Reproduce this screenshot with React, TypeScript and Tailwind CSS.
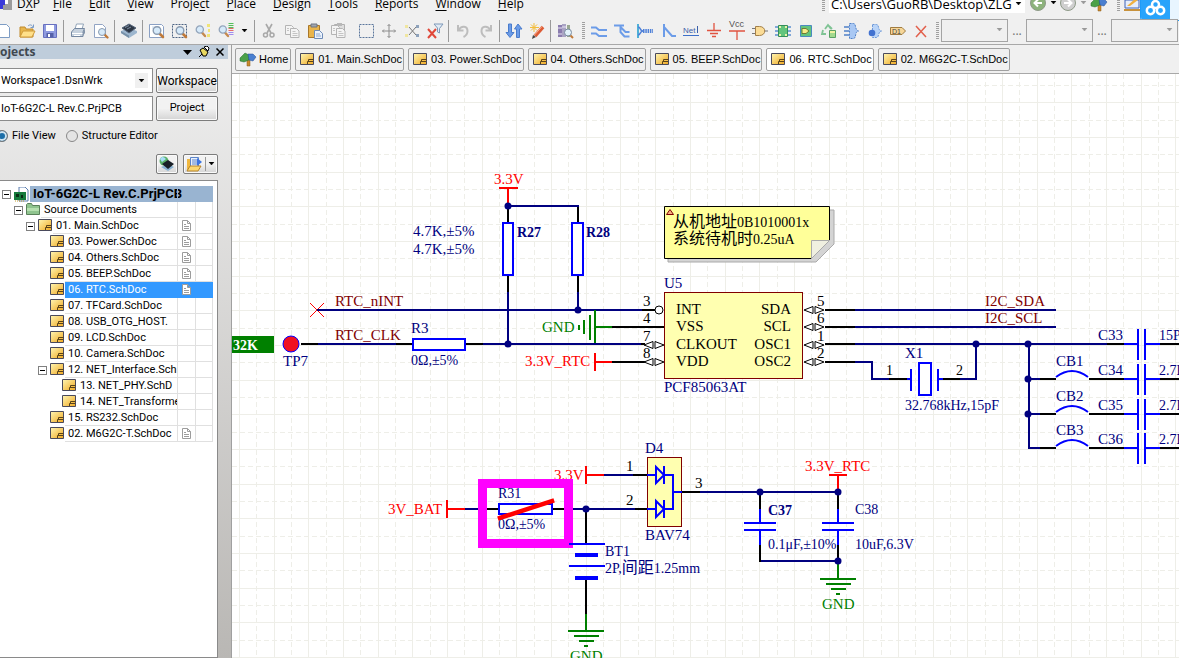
import { ReactNode } from "react";

interface IconProps {
    children: ReactNode;
    size?: number;
}

function Icon({ children, size = 16 }: IconProps) {
    return (
        <svg width={size} height={size} viewBox="0 0 16 16" fill="none" className="shrink-0 overflow-visible" aria-hidden="true">
            {children}
        </svg>
    )
}

const magnifier = (
    <>
        <path d="M10.5 10.5l3.5 3.5" stroke="#c07a3a" strokeWidth="2.6" strokeLinecap="round" />
        <circle cx="8" cy="7.5" r="3.8" fill="#d6eafa" stroke="#8a9bb0" strokeWidth="1.4" />
    </>
)

const smallMagnifier = (
    <>
        <path d="M7 9.5l3 3.5" stroke="#c58a50" strokeWidth="2.4" strokeLinecap="round" />
        <circle cx="4.8" cy="6.5" r="3.6" fill="#d6eafa" stroke="#93a5bb" strokeWidth="1.3" />
    </>
)

const grayPages = (
    <>
        <path d="M1.5 2.5h6l2 2v7h-8z" fill="#f4f4f4" stroke="#b4b4b4" />
        <path d="M6.5 5.5h6l2.500 2.500v6.500h-8.500z" fill="#f4f4f4" stroke="#b4b4b4" />
        <path d="M8.500 8.500h3M8.500 10.500h5M8.500 12.500h5M3 5.500h2M3 7.500h2" stroke="#c4c4c4" />
    </>
)

const icons: Record<string, ReactNode> = {
    New: <path d="M2.500 1.500h8l3 3v10h-11z" fill="#fff" stroke="#7d9cc4" />,
    Open: (
        <>
            <path d="M1 4h5l1 2h7v8H1z" fill="#e8b64c" stroke="#c08a2c" />
            <path d="M1 14l3-6h12l-3 6z" fill="#ffe08a" stroke="#cf9a3a" />
            <path d="M9 3c2-2 4-1 5 1M14.500 1.500v3h-3" stroke="#7a9cc8" />
        </>
    ),
    Save: (
        <>
            <path d="M1.500 1.500h13v13h-13z" fill="#8f9be0" stroke="#6870c0" />
            <path d="M4 2h8v6H4z" fill="#fff" />
            <path d="M4.500 10h7v4.500h-7z" fill="#5560a8" />
            <path d="M6 11h2v3H6z" fill="#fff" />
        </>
    ),
    Print: (
        <>
            <path d="M5 6l1.500-5h7L12 6z" fill="#fff" stroke="#92a4b8" />
            <path d="M1.500 9l3-3.500h10L13 9v4.500H1.500z" fill="#c7d2de" stroke="#7487a0" />
            <path d="M2 10.500h10.500M4 12.500h6" stroke="#fff" />
            <path d="M13 9l2-3v4l-2 3z" fill="#8495aa" />
        </>
    ),
    Preview: (
        <>
            <path d="M1.500 1.500h8l3 3v10h-11z" fill="#fff" stroke="#92a4c4" />
            <path d="M11.500 11.500l3 3" stroke="#c07a3a" strokeWidth="2.400" strokeLinecap="round" />
            <circle cx="9" cy="9" r="3.500" fill="#d6eafa" stroke="#8a9bb0" />
        </>
    ),
    Devices: (
        <>
            <path d="M0 8l8-3 8 3v2l-8 5-8-5z" fill="#9db6ce" />
            <path d="M0 8l8 4.500V15L0 10z" fill="#7690a8" />
            <path d="M1 5l7-4 7 4-7 5z" fill="#2e3846" stroke="#55657a" />
            <path d="M4 4.500l4-2M6 6l4-2" stroke="#7b8da2" />
        </>
    ),
    "Fit document": (
        <>
            <path d="M.5 1.500h12l2 2v11H.500z" fill="#fff" stroke="#8aa0c4" />
            <path d="M3 3h8v3H3z" fill="#e2ebf6" />
            {magnifier}
        </>
    ),
    "Zoom area": (
        <>
            <path d="M.5 1.500h14v13H.500z" stroke="#4e6584" strokeDasharray="2 1" />
            {magnifier}
        </>
    ),
    "Zoom selected": (
        <>
            {smallMagnifier}
            <path d="M12 1h3v3h-3zM13 6h2v3h-2zM12 11h3v3h-3z" fill="#f0e478" />
        </>
    ),
    "Zoom filtered": (
        <>
            {smallMagnifier}
            <path d="M13 0v5" stroke="#52bf59" strokeWidth="5" strokeDasharray="1 1" />
            <path d="M13 5v4" stroke="#e66a6a" strokeWidth="5" strokeDasharray="1 1" />
            <path d="M13 9v4" stroke="#a08cf0" strokeWidth="5" strokeDasharray="1 1" />
        </>
    ),
    Cut: (
        <>
            <path d="M5 1l5 9M11 1L6 10" stroke="#a8a8a8" strokeWidth="1.600" />
            <circle cx="4.500" cy="12" r="2" stroke="#a8a8a8" strokeWidth="1.500" />
            <circle cx="11" cy="12" r="2" stroke="#a8a8a8" strokeWidth="1.500" />
        </>
    ),
    Copy: grayPages,
    Paste: (
        <>
            <path d="M1.500 2.500h11v12h-11z" fill="#e8b44c" stroke="#a8772a" />
            <path d="M4 1h6v3H4z" fill="#a0a6b0" stroke="#6e7480" />
            <path d="M7.500 7.500h5l3 3v5h-8z" fill="#eaf2fc" stroke="#6f8cb8" />
            <path d="M9 11h4M9 13h5" stroke="#8fa8ce" />
        </>
    ),
    "Paste special": (
        <>
            <path d="M4.500 1.500h10v10h-10z" fill="#dedede" stroke="#b0b0b0" />
            <path d="M7 0h5v3H7z" fill="#b8b8b8" />
            {grayPages}
        </>
    ),
    "Select inside area": <path d="M1.500 1.500h14v13h-14z" stroke="#5b769c" strokeDasharray="2 1" />,
    Move: <path d="M8 1.500v13M1.500 8h13M6.500 3L8 1.500 9.500 3M6.500 13L8 14.500 9.500 13M3 6.500L1.500 8 3 9.500M13 6.500L14.500 8 13 9.500" stroke="#8c8c8c" />,
    Deselect: (
        <>
            <path d="M5 4l7 8M5 12l7-8" stroke="#777" />
            <path d="M1 2h3v3H1zM1 11h3v3H1z" fill="#f0e6a0" />
            <path d="M12 2h3v3h-3zM12 11h3v3h-3z" fill="#8ea2bb" />
        </>
    ),
    "Clear filter": (
        <>
            <path d="M7 1h9l-3.500 4.500V10l-2-1V5z" fill="#e0ebf6" stroke="#7f99b8" />
            <path d="M1 6l8 9M9 6l-8 9" stroke="#e0483a" strokeWidth="2" />
        </>
    ),
    Undo: <path d="M3 2v5.500h5.500M3.500 7c3-5 9-4 9 1 0 3-2 5-4 6" stroke="#bdbdbd" strokeWidth="2" />,
    Redo: <path d="M13 2v5.500H7.500M12.500 7c-3-5-9-4-9 1 0 3 2 5 4 6" stroke="#bdbdbd" strokeWidth="2" />,
    "Up down hierarchy": (
        <>
            <path d="M2.500 1h3v8.500H8L4 14.500 0 9.500h2.500z" fill="#6c9ce8" stroke="#4a7ccc" />
            <path d="M10.500 14.500h3V6H16L12 1 8.500 6h2z" fill="#6c9ce8" stroke="#4a7ccc" />
        </>
    ),
    "Cross probe": (
        <>
            <path d="M5 0v9M1 4.500h9M2 1.500l6 6M8 1.500l-6 6" stroke="#f3bd3c" />
            <path d="M14 4L6 13" stroke="#dd5b35" strokeWidth="3.500" />
            <path d="M13 3.500L5.500 12" stroke="#f7b08c" />
            <path d="M4 12l3 2-4 2z" fill="#444" />
        </>
    ),
    "Browse library": (
        <>
            <path d="M1 2h4v12H1z" fill="#8a7cae" />
            <path d="M5 1h4v13H5z" fill="#aaa4c4" />
            <path d="M10 2h3v12h-3z" fill="#9aa892" />
            <path d="M1 5h4M1 11h4M5 4h4" stroke="#e8e4f4" />
            <path d="M13 12l3 3" stroke="#c07a3a" strokeWidth="2" />
            <circle cx="11" cy="9.500" r="3.500" fill="#e3f3fb" stroke="#7a8ca0" />
        </>
    ),
    "Place wire": <path d="M0 4.500h5l3 2.500h8M0 10.500h5l3 2.500h8" stroke="#6c9ce8" strokeWidth="2" />,
    "Place bus": <path d="M0 2.500h10M6.500 2v7l4 4.500h5M6.500 4l5 5h4" stroke="#6c9ce8" strokeWidth="2" />,
    "Place signal harness": (
        <>
            <path d="M1 1v14" stroke="#4fb0d8" strokeWidth="2" />
            <path d="M1 4c3 0 1.500 4 5 4-3.500 0-2 4-5 4" stroke="#4f80d8" strokeWidth="1.500" />
            <path d="M6 8h10" stroke="#4f80d8" strokeWidth="4" strokeDasharray="1.500 .8" />
        </>
    ),
    "Place bus entry": <path d="M4 1v13M4 4l8 9h4" stroke="#6c9ce8" strokeWidth="2" />,
    "Place net label": (
        <>
            <path d="M0 12.500h16" stroke="#3d6fc8" />
            <text x="0" y="10" fontSize="8" fontFamily="Liberation Sans, sans-serif" fill="#3d5fa8">Net</text>
            <path d="M14.500 3v7" stroke="#3d5fa8" />
        </>
    ),
    "GND power port": <path d="M8 0v7.500M1 7.500h14M4 10.500h8M6 13.500h4" stroke="#e05340" strokeWidth="1.300" />,
    "VCC power port": (
        <>
            <text x="0" y="4" fontSize="9" fontFamily="Liberation Sans, sans-serif" fill="#555">Vcc</text>
            <path d="M0 8h16M8 8v9" stroke="#e05340" strokeWidth="1.300" />
        </>
    ),
    "Place part": (
        <>
            <path d="M0 5.500h4M0 10.500h4M12 8h4" stroke="#777" />
            <path d="M3.500 3.500h4c7 0 7 9 0 9h-4z" fill="#fbdc96" stroke="#a3804a" />
        </>
    ),
    "Place sheet symbol": (
        <>
            <path d="M3.500 2.500h9v11h-9z" fill="#62c47c" stroke="#358f58" />
            <path d="M0 4h3M0 8h3M0 12h3M13 4h3M13 8h3M13 12h3" stroke="#5b8fd0" strokeWidth="1.500" />
            <path d="M4 3h2v2H4zM4 11h2v2H4zM10 3h2v2h-2zM10 11h2v2h-2z" fill="#e9f2a8" />
        </>
    ),
    "Place sheet entry": (
        <>
            <path d="M2.500 2.500h11v11h-11z" fill="#62c47c" stroke="#4a8ac0" />
            <path d="M4 5.500h4l3 2.500-3 2.500H4z" fill="#f6ee8a" stroke="#6f7a35" />
        </>
    ),
    "Place device sheet": (
        <>
            <path d="M4 6l3-4 3 4M2 7l-1 4h4M8 3l3 3" stroke="#7fc394" strokeWidth="1.800" />
            <path d="M8.500 7.500h6v7h-6z" fill="#a2d98e" stroke="#58a064" />
            <path d="M9 8h5v2H9z" fill="#f1f2a2" />
        </>
    ),
    "Place harness connector": (
        <>
            <path d="M5.500 .5h4c3 0 1 7 5 7.500-4 .5-2 7.500-5 7.500h-4z" fill="#a9c8f4" stroke="#4f80c8" strokeDasharray="2 1" />
            <path d="M0 4h5M0 8h5M0 12h5" stroke="#4f80c8" strokeWidth="1.500" />
        </>
    ),
    "Place harness entry": (
        <>
            <path d="M5.500 1.500h4c3 0 1 6 5 6.500-4 .5-2 6.500-5 6.500h-4z" fill="#b9d4f8" stroke="#6c98d8" strokeDasharray="2 1" />
            <circle cx="5" cy="10" r="3.300" fill="#4272d0" />
        </>
    ),
    "Place port": (
        <>
            <path d="M.5 4.500H12l3.500 3.500-3.500 3.500H.500z" fill="#f7d698" stroke="#a07c40" />
            <text x="2" y="10.500" fontSize="7" fontFamily="Liberation Sans, sans-serif" fill="#444">D1</text>
        </>
    ),
    "Place no ERC": <path d="M3 3l10 11M13 3L3 14" stroke="#e2604c" strokeWidth="1.500" />,
}

const mainTools = [
    "New", "Open", "Save", "|", "Print", "Preview", "|", "Devices", "|",
    "Fit document", "Zoom area", "Zoom selected", "Zoom filtered", "v", "|",
    "Cut", "Copy", "Paste", "Paste special", " ",
    "Select inside area", "Move", "Deselect", "Clear filter", "|",
    "Undo", "Redo", "|", "Up down hierarchy", "Cross probe", "|", "Browse library",
]

const wiringTools = [
    "Place wire", "Place bus", "Place signal harness", "Place bus entry", "Place net label",
    "GND power port", "VCC power port", "Place part", "Place sheet symbol", "Place sheet entry",
    "Place device sheet", "Place harness connector", "Place harness entry", "Place port", "Place no ERC",
]

function Caret({ className = "text-black" }: { className?: string }) {
    return (
        <svg width="7" height="4" viewBox="0 0 7 4" className={`shrink-0 ${className}`} aria-hidden="true">
            <path d="M1 0h5L3.500 3z" fill="currentColor" stroke="currentColor" strokeWidth=".5" />
        </svg>
    )
}

function Grip({ className }: { className: string }) {
    return <div className={`w-[3px] shrink-0 bg-[repeating-linear-gradient(#a0a0a0_0_1px,transparent_1px_2px)] ${className}`} />
}

function Tool({ name }: { name: string }) {
    if (name === "|") {
        return <div className="flex w-[5px] shrink-0 justify-center"><div className="h-[22px] w-px bg-[#9a9a9a]" /></div>
    }
    if (name === " ") return <div className="w-[5px] shrink-0" />
    if (name === "v") {
        return <button aria-label="More" className="flex w-[15px] shrink-0 items-center justify-center"><Caret /></button>
    }
    return (
        <button aria-label={name} className="flex h-6 w-[23px] shrink-0 items-center justify-center">
            <Icon>{icons[name]}</Icon>
        </button>
    )
}

// [text before the shortcut letter, shortcut letter, text after]
const menus = [
    ["D", "X", "P"], ["", "F", "ile"], ["", "E", "dit"], ["", "V", "iew"], ["Proje", "c", "t"], ["", "P", "lace"],
    ["", "D", "esign"], ["", "T", "ools"], ["", "R", "eports"], ["", "W", "indow"], ["", "H", "elp"],
]

function Tree({ size = 16 }: { size?: number }) {
    return (
        <Icon size={size}>
            <path d="M7 5h3v10H7z" fill="#c98a2e" stroke="#8a5a18" strokeWidth=".5" />
            <path d="M0 7l5-5 4 2v5l-5 2-4-1z" fill="#4aa048" stroke="#246a2c" strokeWidth=".5" />
            <path d="M8 3h5l3 3-3 4-4-1z" fill="#4a7fd0" stroke="#234f94" strokeWidth=".5" />
        </Icon>
    )
}

function RoundArrow({ color, flip }: { color: string; flip?: boolean }) {
    return (
        <svg width="18" height="18" viewBox="0 0 18 18" fill="none" aria-hidden="true" className={flip ? "-scale-x-100" : ""}>
            <circle cx="9" cy="9" r="7.500" fill={color} stroke="#8e9a88" />
            <path d="M13 9H6M9 5.500L5.500 9 9 12.500" stroke="#fff" strokeWidth="2" />
        </svg>
    )
}

function MenuBar() {
    return (
        <header className="relative flex h-[17px] shrink-0 items-start font-['Open_Sans',sans-serif] text-[12px] leading-2 text-black">
            <svg width="13" height="11" viewBox="0 0 13 11" className="mr-1 shrink-0" aria-hidden="true">
                <path d="M3 0h9v10H3z" fill="#9c9c9c" />
                <path d="M0 0h5v5H3v4H0z" fill="#3b3bd8" />
                <path d="M5 0h3v4H5z" fill="#fff" />
            </svg>
            <nav className="flex flex-1 gap-[17px]">
                {menus.map(([before, key, after]) => (
                    <button key={before + key + after} className="h-2 shrink-0 text-left leading-2 first:-mr-1">
                        {before}<span className="underline underline-offset-2">{key}</span>{after}
                    </button>
                ))}
            </nav>
            <Grip className="mr-1 h-3" />
            <div className="flex h-[13px] w-[196px] shrink-0 items-start bg-white">
                <input
                    aria-label="Document path"
                    defaultValue="C:\Users\GuoRB\Desktop\ZLG-"
                    className="-mt-1.5 h-5 w-[183px] bg-transparent pl-0.5 text-[13px] leading-5 outline-none"
                />
                <button aria-label="Path history" className="flex h-2 w-[13px] items-center justify-center"><Caret /></button>
            </div>
            <div className="-mt-2 flex h-[21px] w-[66px] shrink-0 items-center justify-between px-1 text-black">
                <button aria-label="Back"><RoundArrow color="#8db37c" /></button>
                <button aria-label="Back history"><Caret /></button>
                <button aria-label="Forward"><RoundArrow color="#cfcfcf" flip /></button>
                <button aria-label="Forward history"><Caret className="text-[#999]" /></button>
            </div>
            <button aria-label="Home page" className="-mt-1 w-5 shrink-0"><Tree /></button>
            <Grip className="ml-1.5 h-3" />
            <svg width="18" height="12" viewBox="0 0 18 12" className="mr-[37px] ml-1 shrink-0" aria-hidden="true">
                <path d="M1 0h14v8H1z" fill="#e7eefb" stroke="#3f62b8" />
                <path d="M3 6l9-8 2 2-8 6z" fill="#f0b040" />
                <path d="M0 9h17v2H0z" fill="#c8923c" />
            </svg>
            <div className="absolute top-0 right-0 flex h-[21px] w-[39px] overflow-hidden rounded-bl-sm border-b border-l border-[#1e9bf8] bg-[#e8f5ff]">
                <button aria-label="Cloud upload" className="flex w-[29px] items-start justify-center bg-[#29a3fb]">
                    <svg width="21" height="17" viewBox="0 0 21 17" fill="none" stroke="#fff" strokeWidth="2.500">
                        <circle cx="10.500" cy="4.500" r="3.500" />
                        <circle cx="5.500" cy="10.500" r="3.700" />
                        <circle cx="15.500" cy="10.500" r="3.700" />
                    </svg>
                </button>
            </div>
        </header>
    )
}

function ToolbarSelect({ label }: { label: string }) {
    return (
        <div className="relative h-[23px] w-[67px] shrink-0 border border-[#a4a4a4] bg-[#f0f0f0]">
            <select aria-label={label} className="h-full w-full appearance-none" />
            <div className="pointer-events-none absolute top-2 right-1"><Caret className="text-[#999]" /></div>
        </div>
    )
}

function Toolbar() {
    return (
        <div className="flex h-7 shrink-0 items-center border-b border-[#a8a8a8]">
            <div className="-ml-2 flex items-center">
                {mainTools.map((name, i) => <Tool key={i} name={name} />)}
            </div>
            <Grip className="mr-0.5 ml-1.5 h-[18px]" />
            <div className="flex items-center">
                {wiringTools.map((name) => <Tool key={name} name={name} />)}
            </div>
            <Grip className="mr-0.5 ml-1 h-[18px]" />
            <ToolbarSelect label="Mask level" />
            <button aria-label="Mask options" className="mx-1 w-2.5 shrink-0 text-xs text-[#777]">...</button>
            <ToolbarSelect label="Variant" />
            <button aria-label="Variant options" className="mx-1 w-2.5 shrink-0 text-xs text-[#777]">...</button>
            <ToolbarSelect label="Revision" />
        </div>
    )
}

function SheetIcon() {
    return (
        <svg width="14" height="12" viewBox="0 0 14 12" className="shrink-0" aria-hidden="true">
            <defs>
                <linearGradient id="sheet" x1="0" y1="0" x2="1" y2="1">
                    <stop offset="0" stopColor="#fff6b4" />
                    <stop offset="1" stopColor="#f0a820" />
                </linearGradient>
            </defs>
            <path d="M.5 .5h13v11H.500z" fill="url(#sheet)" stroke="#4a4a5c" />
            <path d="M7.500 11v-2.500h1v-2h5M8 8.500h5" fill="none" stroke="#5a4318" />
        </svg>
    )
}

function DocIcon() {
    return (
        <svg width="9" height="11" viewBox="0 0 9 11" fill="#fff" stroke="#9c9c9c" aria-label="Open document">
            <path d="M.5 .5h5l3 3v7h-8zM5.500 .5v3h3M2 4.500h2M2 6.500h5M2 8.500h5" />
        </svg>
    )
}

interface TreeItem {
    label: string;
    level: number;
    kind?: "project" | "folder";
    expanded?: boolean;
    open?: boolean;
    selected?: boolean;
}

const treeItems: TreeItem[] = [
    { label: "IoT-6G2C-L Rev.C.PrjPCB", level: 0, kind: "project", expanded: true },
    { label: "Source Documents", level: 1, kind: "folder", expanded: true },
    { label: "01. Main.SchDoc", level: 2, expanded: true, open: true },
    { label: "03. Power.SchDoc", level: 3, open: true },
    { label: "04. Others.SchDoc", level: 3, open: true },
    { label: "05. BEEP.SchDoc", level: 3, open: true },
    { label: "06. RTC.SchDoc", level: 3, open: true, selected: true },
    { label: "07. TFCard.SchDoc", level: 3 },
    { label: "08. USB_OTG_HOST.", level: 3 },
    { label: "09. LCD.SchDoc", level: 3 },
    { label: "10. Camera.SchDoc", level: 3 },
    { label: "12. NET_Interface.Sch", level: 3, expanded: true },
    { label: "13. NET_PHY.SchD", level: 4 },
    { label: "14. NET_Transforme", level: 4 },
    { label: "15. RS232.SchDoc", level: 3 },
    { label: "02. M6G2C-T.SchDoc", level: 3, open: true },
]

const indents = ["pl-0.5", "pl-3.5", "pl-[26px]", "pl-[38px]", "pl-[50px]"]

function TreeRow({ item }: { item: TreeItem }) {
    const root = item.kind === "project"
    const line = item.selected ? "border-[#3399ff]" : root ? "border-[#99b4d1]" : "border-[#e0e0e0]"
    const fill = item.selected ? "bg-[#3399ff] text-white" : root ? "bg-[#99b4d1] text-[13px] font-bold" : ""
    return (
        <li className={`flex h-4 ${indents[item.level]}`}>
            <div className="flex w-3 shrink-0 items-center">
                {item.expanded && (
                    <button aria-label={`Collapse ${item.label}`} className="flex size-[9px] items-center justify-center border border-[#808080] bg-white">
                        <span className="h-px w-[5px] bg-black" />
                    </button>
                )}
            </div>
            <div className={`flex shrink-0 items-start pt-px ${root ? "w-4" : "w-[15px]"}`}>
                {root && (
                    <svg width="15" height="15" viewBox="0 0 15 15" aria-hidden="true">
                        <path d="M5 0h6l3 3v11H5z" fill="#fff" stroke="#5c7fb0" />
                        <path d="M0 5h12v8H0z" fill="#157a3c" />
                        <path d="M2 7h3v3H2zM7 8h2v3H7z" fill="#072c14" />
                        <path d="M1 14h10" stroke="#c8a030" strokeDasharray="1 1" />
                    </svg>
                )}
                {item.kind === "folder" && (
                    <svg width="14" height="12" viewBox="0 0 14 12" aria-hidden="true">
                        <path d="M.5 1.500L1.500 .5h4l1 2h7v9H.500z" fill="#8fc48f" stroke="#5a805a" />
                        <path d="M1 5h12v3H1z" fill="#b6e0b0" />
                    </svg>
                )}
                {!item.kind && <SheetIcon />}
            </div>
            <div className={`flex min-w-0 flex-1 border-b ${line} ${fill}`}>
                <span className={`min-w-0 flex-1 pl-[3px] leading-4 whitespace-nowrap ${root ? "" : "overflow-hidden"}`}>{item.label}</span>
                <span className={`flex w-[18px] shrink-0 items-center justify-center border-l ${line}`}>{item.open && <DocIcon />}</span>
                <span className={`w-[18px] shrink-0 border-x ${line}`} />
            </div>
        </li>
    )
}

const buttonStyle = "rounded-xs border border-[#7c7c7c] bg-linear-to-b from-[#f2f2f2] from-50% to-[#d4d4d4] inset-ring inset-ring-[#fafafa]"

function ProjectsPanel() {
    return (
        <aside className="flex w-[231px] shrink-0 flex-col overflow-hidden bg-linear-to-b from-[#f0f0f0] to-[#b9b7b4] font-[Roboto,sans-serif] text-[11px] text-black">
            <div className="mr-[3px] flex h-[14px] shrink-0 items-center overflow-hidden bg-[#bfcddb] pr-1">
                <h2 className="-ml-[13px] flex-1 font-['Open_Sans',sans-serif] text-[12px] leading-3 font-bold text-[#404850]">Projects</h2>
                <div className="flex items-center gap-1.5">
                    <button aria-label="Panel menu">
                        <svg width="9" height="5" viewBox="0 0 9 5"><path d="M0 0h9L4.500 5z" /></svg>
                    </button>
                    <button aria-label="Pin panel">
                        <svg width="12" height="12" viewBox="0 0 12 12">
                            <path d="M1 11l3-3" stroke="#000" />
                            <path d="M2 4l3-2 5 4-2 4H5z" fill="#e8d860" stroke="#000" />
                            <path d="M6 1l3-1 2 2-1 3z" fill="#fff" stroke="#000" />
                        </svg>
                    </button>
                    <button aria-label="Close panel">
                        <svg width="8" height="8" viewBox="0 0 8 8"><path d="M.5 .5l7 7M7.500 .5l-7 7" stroke="#000" strokeWidth="1.500" /></svg>
                    </button>
                </div>
            </div>
            <div className="mt-[9px] mr-[13px] grid shrink-0 grid-cols-[minmax(0,1fr)_62px] gap-[3px]">
                <div className="relative -ml-1 h-[25px] border border-[#8c8c8c] bg-white">
                    <select aria-label="Workspace file" className="h-full w-full appearance-none pt-0.5 pl-1">
                        <option>Workspace1.DsnWrk</option>
                    </select>
                    <div className="pointer-events-none absolute top-1 right-1 flex h-[15px] w-[13px] items-center justify-center bg-[#f0f0f0]"><Caret /></div>
                </div>
                <button className={`h-[25px] text-[12px] ${buttonStyle}`}>Workspace</button>
                <input aria-label="Project file" defaultValue="IoT-6G2C-L Rev.C.PrjPCB" className="-ml-1 h-[25px] min-w-0 border border-[#8c8c8c] bg-white pl-1" />
                <button className={`h-[25px] ${buttonStyle}`}>Project</button>
            </div>
            <div className="-ml-1 mt-2 flex h-[14px] shrink-0 items-center gap-2.5">
                <label className="flex items-center gap-1">
                    <input type="radio" name="view" defaultChecked className="size-3 appearance-none rounded-full border border-[#777] bg-white checked:bg-[#1b6ea8] checked:inset-ring-2 checked:inset-ring-[#cfe4f0]" />
                    File View
                </label>
                <label className="flex items-center gap-1">
                    <input type="radio" name="view" className="size-3 appearance-none rounded-full border border-[#888] bg-[#e4e4e4]" />
                    Structure Editor
                </label>
            </div>
            <div className="mt-[11px] mr-[13px] flex h-5 shrink-0 justify-end gap-[5px]">
                <button aria-label="Compile project" className={`flex w-[22px] items-center justify-center ${buttonStyle}`}>
                    <Icon>
                        <circle cx="5" cy="5" r="4.500" fill="#58b068" />
                        <path d="M1 3c2-3 4-2 6 0L3 6z" fill="#a8dcf8" />
                        <path d="M2 11l7-3 6 3-6 4z" fill="#8ab4d4" />
                        <path d="M3 8l6-4 6 4-6 5z" fill="#182028" />
                    </Icon>
                </button>
                <button aria-label="Project options" className={`flex w-[35px] items-center justify-center gap-0.5 ${buttonStyle}`}>
                    <Icon>
                        <path d="M0 3h6v11H0z" fill="#f0b840" />
                        <path d="M3.500 1.500h8v10h-8z" fill="#e8f0fc" stroke="#5c84c8" />
                        <path d="M5 4h5M5 6h5M5 8h5" stroke="#5c84c8" />
                        <path d="M10 2l5 4-5 4z" fill="#3c74e0" />
                        <path d="M0 15l3-5h11l-3 5z" fill="#fcd870" stroke="#b88428" />
                    </Icon>
                    <span className="h-3.5 w-px bg-[#999]" />
                    <Caret />
                </button>
            </div>
            <ul className="-ml-px mt-1.5 mr-[13px] flex-1 overflow-hidden border border-[#8a8a8a] bg-white pt-[5px] pr-1">
                {treeItems.map((item) => <TreeRow key={item.label} item={item} />)}
            </ul>
        </aside>
    )
}

const tabs = ["01. Main.SchDoc", "03. Power.SchDoc", "04. Others.SchDoc", "05. BEEP.SchDoc", "06. RTC.SchDoc", "02. M6G2C-T.SchDoc"]

function DocumentTabs() {
    return (
        <div className="flex h-7 shrink-0 items-center gap-1 pl-[3px] font-['Liberation_Sans',sans-serif] text-[11px] text-black">
            <button className="flex h-[23px] shrink-0 items-center gap-[3px] rounded-xs border border-[#a0a0a0] pr-0.5 pl-1">
                <Tree />Home
            </button>
            {tabs.map((tab) => (
                <button
                    key={tab}
                    className={`flex h-[23px] shrink-0 items-center gap-1 rounded-xs border border-[#a0a0a0] pr-px pl-1 ${tab.startsWith("06") ? "bg-white" : ""}`}
                >
                    <SheetIcon />{tab}
                </button>
            ))}
        </div>
    )
}

const NAVY = "#000080"
const BLUE = "#0000ff"
const GREEN = "#008000"
const RED = "#ff0000"
const MAROON = "#800000"

function Wire({ d, color = NAVY, width = 2 }: { d: string; color?: string; width?: number }) {
    return <path d={d} stroke={color} strokeWidth={width} fill="none" shapeRendering="crispEdges" />
}

interface LabelProps {
    x: number;
    y: number;
    children: ReactNode;
    color?: string;
    size?: number;
    bold?: boolean;
    end?: boolean;
}

function Label({ x, y, children, color = NAVY, size = 15, bold, end }: LabelProps) {
    return (
        <text x={x} y={y} fill={color} fontSize={size} fontWeight={bold ? 700 : 400} textAnchor={end ? "end" : "start"}>
            {children}
        </text>
    )
}

function Junction({ x, y }: { x: number; y: number }) {
    return <circle cx={x} cy={y} r="3.500" fill={NAVY} />
}

// bidirectional pin marker, 20px wide
function PinArrows({ x, y }: { x: number; y: number }) {
    return (
        <g transform={`translate(${x} ${y})`} fill="#fff" stroke="#000">
            <path d="M0 0l9-3.500v7zM20 0l-9-3.500v7z" />
        </g>
    )
}

function Ground({ x, y }: { x: number; y: number }) {
    return <Wire color={GREEN} d={`M${x} ${y - 17}v17M${x - 18} ${y}h36M${x - 12} ${y + 5}h25M${x - 7} ${y + 10}h15M${x - 2} ${y + 15}h4`} />
}

function Grid() {
    const columns = Array.from({ length: 56 }, (_, i) => Math.round(239 + i * 17.34) + 0.5)
    const rows = Array.from({ length: 34 }, (_, i) => Math.round(85 + i * 17.33) + 0.5)
    return (
        <g stroke="#eeeee8" shapeRendering="crispEdges">
            {columns.map((x, i) => <path key={x} d={`M${x} 74V1400`} strokeDasharray={i % 2 ? "5 3" : undefined} />)}
            {rows.map((y, i) => <path key={y} d={`M232 ${y}H2400`} strokeDasharray={i % 2 === 0 ? "5 3" : undefined} />)}
        </g>
    )
}

function PullUps() {
    return (
        <>
            <Label x={494} y={184} color={RED}>3.3V</Label>
            <Wire color={RED} d="M499 188h19M508 188v17" />
            <Wire d="M508 206h71M508 292v52M578 292v18" />
            <Wire color="#000" d="M508 208v14M578 207v15M508 276v16M578 276v16" />
            <g fill="#fff" stroke={BLUE} strokeWidth="2" shapeRendering="crispEdges">
                <rect x="503" y="223" width="10" height="52" />
                <rect x="572" y="223" width="11" height="52" />
            </g>
            <Junction x={508} y={206} />
            <Junction x={578} y={310} />
            <Label x={517} y={237} size={14} bold>R27</Label>
            <Label x={586} y={237} size={14} bold>R28</Label>
            <Label x={413} y={236}>4.7K,±5%</Label>
            <Label x={413} y={254}>4.7K,±5%</Label>
        </>
    )
}

function ClockNets() {
    return (
        <>
            <path d="M310 303l14 14M324 303l-14 14" stroke={RED} />
            <Wire d="M317 310h325M318 344h78M483 344h158" />
            <Wire color="#000" d="M642 310h13M301 344h17M396 344h16M466 344h17M641 344h4" />
            <rect x="413" y="339" width="52" height="11" fill="#fff" stroke={BLUE} strokeWidth="2" shapeRendering="crispEdges" />
            <Junction x={508} y={344} />
            <Label x={335} y={306} color={MAROON}>RTC_nINT</Label>
            <Label x={335} y={340} color={MAROON}>RTC_CLK</Label>
            <Label x={411} y={333}>R3</Label>
            <Label x={411} y={365} size={14}>0Ω,±5%</Label>
            <rect x="232" y="336" width="42" height="17" fill={GREEN} />
            <Label x={233} y={350} size={14} color="#fff" bold>32K</Label>
            <circle cx="291" cy="344" r="8" fill="#f01020" stroke={BLUE} />
            <Label x={283} y={366}>TP7</Label>
            <Label x={542} y={332} color={GREEN}>GND</Label>
            <Wire color={GREEN} d="M579 325v5M584 320v14M590 315v25M595 310v33M595 327h17" />
            <Label x={525} y={366} color={RED}>3.3V_RTC</Label>
            <Wire color={RED} d="M595 353v18M595 362h17" />
            <Wire color="#000" d="M612 327h52M612 362h33" />
        </>
    )
}

const leftPins = [["3", "INT"], ["4", "VSS"], ["7", "CLKOUT"], ["8", "VDD"]]
const rightPins = [["5", "SDA"], ["6", "SCL"], ["1", "OSC1"], ["2", "OSC2"]]
const pinRows = [310, 327, 345, 362]

function ClockChip() {
    return (
        <>
            <rect x="664.500" y="292.500" width="138" height="86" fill="#ffffb0" stroke={MAROON} />
            <Label x={664} y={288}>U5</Label>
            <Label x={664} y={392}>PCF85063AT</Label>
            <circle cx="659" cy="310" r="4" fill="#fff" stroke="#000" />
            <PinArrows x={644} y={345} />
            <PinArrows x={644} y={362} />
            {pinRows.map((y, i) => (
                <g key={y}>
                    <Label x={643} y={y - 4} color="#000">{leftPins[i][0]}</Label>
                    <Label x={676} y={y + 4} color="#000">{leftPins[i][1]}</Label>
                    <Label x={791} y={y + 4} color="#000" end>{rightPins[i][1]}</Label>
                    <PinArrows x={804} y={y} />
                    <Label x={817} y={y - 4} color="#000">{rightPins[i][0]}</Label>
                </g>
            ))}
            <Wire color="#000" d="M825 310h31M825 327h31M825 344h31M825 362h31" />
        </>
    )
}

function Note() {
    return (
        <>
            <path d="M668 210h166v34l-18 18H668z" fill="#d4d4d4" stroke="#aaa" />
            <path d="M664.500 206.500h165v34l-18 18h-147z" fill="#ffff99" />
            <path d="M829.500 240V206.500h-165v52h147" fill="none" stroke="#000" />
            <path d="M811.500 258.500v-18h18z" fill="#f0f0e0" stroke="#aaa" />
            <path d="M666.500 214.500l3.500-5 3.500 5z" fill="#f8b080" stroke={MAROON} />
            <Label x={673} y={227} size={14} color="#000">
                <tspan fontSize="16">从机地址</tspan>0B1010001x
            </Label>
            <Label x={673} y={244} size={14} color="#000">
                <tspan fontSize="16">系统待机时</tspan>0.25uA
            </Label>
        </>
    )
}

const loads = [
    { y: 344, name: "C33", value: "15PF" },
    { y: 379, name: "C34", value: "2.7PF", bridge: "CB1" },
    { y: 414, name: "C35", value: "2.7PF", bridge: "CB2" },
    { y: 448, name: "C36", value: "2.7PF", bridge: "CB3" },
]

function Crystal() {
    return (
        <>
            <Label x={985} y={306} color={MAROON}>I2C_SDA</Label>
            <Label x={985} y={323} color={MAROON}>I2C_SCL</Label>
            <Wire d="M855 310h201M855 327h201M855 344h252M855 362h17v17h17M960 379h16v-35M1029 344v105" />
            <Wire color="#000" d="M889 379h18M943 379h17" />
            <Wire color={BLUE} d="M907 379h4M911 369v22M938 369v22M938 379h5" />
            <rect x="919" y="363" width="12" height="32" fill="#fff" stroke={BLUE} strokeWidth="2" shapeRendering="crispEdges" />
            <Label x={905} y={358}>X1</Label>
            <Label x={886} y={375} size={14} color="#000">1</Label>
            <Label x={956} y={375} size={14} color="#000">2</Label>
            <Label x={905} y={410} size={14}>32.768kHz,15pF</Label>
            <Junction x={976} y={344} />
            <Junction x={1028} y={344} />
            <Junction x={1028} y={379} />
            <Junction x={1028} y={414} />
            {loads.map(({ y, name, value, bridge }) => (
                <g key={name}>
                    {bridge && (
                        <>
                            <Wire d={`M1028 ${y}h12`} />
                            <Wire color="#000" d={`M1040 ${y}h16M1089 ${y}h18`} />
                            <path d={`M1056 ${y - 2}q16-12 32 0`} stroke={BLUE} strokeWidth="2" fill="none" />
                            <Label x={1056} y={y - 13}>{bridge}</Label>
                        </>
                    )}
                    <Wire color="#000" d={`M1107 ${y}h17M1160 ${y}h30`} />
                    <Wire color={BLUE} d={`M1124 ${y}h14M1138 ${y - 15}v31M1145 ${y - 15}v31M1145 ${y}h15`} />
                    <Label x={1098} y={y - 4}>{name}</Label>
                    <Label x={1159} y={y - 4} size={14}>{value}</Label>
                </g>
            ))}
        </>
    )
}

function Battery() {
    return (
        <>
            <Label x={388} y={514} color={RED}>3V_BAT</Label>
            <Wire color={RED} d="M447 500v18M447 509h18" />
            <Wire d="M465 509h18M570 509h65M604 475h29" />
            <Wire color="#000" d="M483 509h15M553 509h17M633 475h14M635 509h12M586 510v33M586 580v34" />
            <rect x="499" y="504" width="53" height="10" fill="#fff" stroke={BLUE} strokeWidth="2" shapeRendering="crispEdges" />
            <Label x={498} y={498} size={14}>R31</Label>
            <Label x={498} y={529} size={14}>0Ω,±5%</Label>
            <path d="M500 518l52-17" stroke={RED} strokeWidth="4.500" strokeLinecap="square" />
            <Label x={554} y={480} color={RED}>3.3V</Label>
            <Wire color={RED} d="M586 466v18M586 475h18" />
            <rect x="482.500" y="483.500" width="86" height="60" fill="none" stroke="#ff00ff" strokeWidth="9" />
            <Junction x={586} y={509} />
            <Wire color={BLUE} d="M569 544h36M569 566h36" />
            <Wire color={BLUE} width={4} d="M575 555h23M575 578h23" />
            <Ground x={586} y={631} />
            <Label x={570} y={661} color={GREEN}>GND</Label>
            <Label x={605} y={556} size={14}>BT1</Label>
            <Label x={605} y={573} size={14}>2P,<tspan fontSize="16">间距</tspan>1.25mm</Label>
        </>
    )
}

function DiodeAndFilter() {
    return (
        <>
            <rect x="647.500" y="457.500" width="34" height="69" fill="#ffffb0" stroke={MAROON} />
            <g stroke={BLUE} strokeWidth="2" fill="none">
                <path d="M647 475h26v34h-26M673 492h9" />
                <path d="M656 467v16l8-8zM656 501v16l8-8z" fill="#ffffb0" />
                <path d="M664 466v18M664 500v18" />
            </g>
            <Label x={645} y={453}>D4</Label>
            <Label x={645} y={540}>BAV74</Label>
            <Label x={626} y={471} color="#000">1</Label>
            <Label x={626} y={505} color="#000">2</Label>
            <Label x={695} y={488} color="#000">3</Label>
            <Wire d="M700 492h138M760 561h78" />
            <Wire color="#000" d="M682 492h18M760 492v17M760 545v17M838 492v17M838 545v16" />
            <Wire color={BLUE} d="M760 509v14M744 523h32M744 530h32M760 530v15M838 509v14M822 523h32M822 530h32M838 530v15" />
            <Wire color={RED} d="M829 475h18M838 475v16" />
            <Ground x={838} y={579} />
            <Junction x={760} y={492} />
            <Junction x={838} y={492} />
            <Junction x={838} y={561} />
            <Label x={805} y={471} color={RED}>3.3V_RTC</Label>
            <Label x={768} y={515} size={14} bold>C37</Label>
            <Label x={855} y={514} size={14}>C38</Label>
            <Label x={768} y={549} size={14}>0.1μF,±10%</Label>
            <Label x={855} y={549} size={14}>10uF,6.3V</Label>
            <Label x={822} y={609} color={GREEN}>GND</Label>
        </>
    )
}

function Schematic() {
    return (
        <svg className="block h-full w-full font-['Liberation_Serif','Noto_Sans_CJK_SC',serif]" role="img" aria-label="RTC schematic">
            <g transform="translate(-232 -74)">
                <Grid />
                <PullUps />
                <ClockNets />
                <ClockChip />
                <Note />
                <Crystal />
                <Battery />
                <DiodeAndFilter />
            </g>
        </svg>
    )
}

export default function App() {
    return (
        <div className="flex h-screen flex-col overflow-hidden bg-[#f0f0f0]">
            <MenuBar />
            <Toolbar />
            <div className="flex min-h-0 flex-1">
                <ProjectsPanel />
                <main className="flex min-w-0 flex-1 flex-col border-l border-[#a0a0a0]">
                    <DocumentTabs />
                    <div className="min-h-0 flex-1 overflow-hidden border-t border-[#a8a8a8] bg-white">
                        <Schematic />
                    </div>
                </main>
            </div>
        </div>
    )
}
